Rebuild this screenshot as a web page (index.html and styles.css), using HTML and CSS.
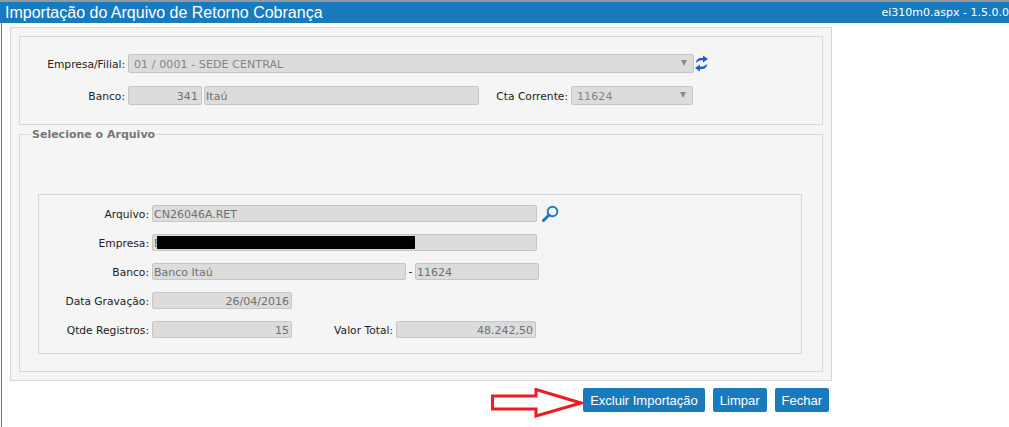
FILE: index.html
```html
<!DOCTYPE html>
<html lang="en">
<head>
    <meta charset="UTF-8">
    <title>Importação do Arquivo de Retorno Cobrança</title>
    <link rel="stylesheet" href="styles.css">
</head>
<body>
    <div class="title-bar">
        <span class="title">Importação do Arquivo de Retorno Cobrança</span>
        <span class="version">ei310m0.aspx - 1.5.0.0</span>
    </div>

    <div class="content">
        <div class="panel">
            <div class="box filter-box">
                <div class="row">
                    <label class="lbl lbl-filter">Empresa/Filial:</label>
                    <div class="field select w-company">01 / 0001 - SEDE CENTRAL<span class="caret"></span></div>
                    <svg class="refresh" width="13" height="17" viewBox="0 0 13 17">
                        <path d="M1 8 C1 4 4 2.500 8 3 L8 0.500 L13 4 L8 7.500 L8 5.500 C5.500 5 3 6 1 8 Z" fill="#1c5fd0"/>
                        <path d="M12 9 C12 13 9 14.500 5 14 L5 16.500 L0 13 L5 9.500 L5 11.500 C7.500 12 10 11 12 9 Z" fill="#1c5fd0"/>
                    </svg>
                </div>
                <div class="row">
                    <label class="lbl lbl-filter">Banco:</label>
                    <div class="field right w-code">341</div>
                    <div class="field w-bank">Itaú</div>
                    <label class="lbl lbl-account">Cta Corrente:</label>
                    <div class="field select w-account">11624<span class="caret"></span></div>
                </div>
            </div>

            <fieldset class="box file-box">
                <legend>Selecione o Arquivo</legend>
                <div class="file-data">
                    <div class="row">
                        <label class="lbl lbl-file">Arquivo:</label>
                        <div class="field w-file">CN26046A.RET</div>
                        <svg class="search" width="17" height="17" viewBox="0 0 17 17">
                            <circle cx="10.500" cy="6.500" r="4.800" fill="none" stroke="#1b7bc0" stroke-width="2"/>
                            <path d="M7 10 L1.500 15.500" stroke="#1b7bc0" stroke-width="3" stroke-linecap="round"/>
                        </svg>
                    </div>
                    <div class="row">
                        <label class="lbl lbl-file">Empresa:</label>
                        <div class="field w-file redacted-field">E<span class="redacted"></span></div>
                    </div>
                    <div class="row">
                        <label class="lbl lbl-file">Banco:</label>
                        <div class="field w-bankname">Banco Itaú</div>
                        <span class="dash">-</span>
                        <div class="field w-bankacc">11624</div>
                    </div>
                    <div class="row">
                        <label class="lbl lbl-file">Data Gravação:</label>
                        <div class="field right w-short">26/04/2016</div>
                    </div>
                    <div class="row">
                        <label class="lbl lbl-file">Qtde Registros:</label>
                        <div class="field right w-short">15</div>
                        <label class="lbl lbl-total">Valor Total:</label>
                        <div class="field right w-short">48.242,50</div>
                    </div>
                </div>
            </fieldset>
        </div>

        <div class="actions">
            <svg class="arrow" width="93" height="30" viewBox="0 0 93 30">
                <path d="M1.500 8 L45 8 L45 1.500 L90 15 L45 28 L45 21 L1.500 21 Z" fill="#fff" stroke="#ed1c24" stroke-width="3"/>
            </svg>
            <button class="btn">Excluir Importação</button>
            <button class="btn">Limpar</button>
            <button class="btn">Fechar</button>
        </div>
    </div>
</body>
</html>
```

FILE: styles.css
```css
html, body {
    height: 427px;
    overflow: hidden;
}

body {
    margin: 0;
    padding: 0;
    background: white;
    font-family: "DejaVu Sans", sans-serif;
    font-size: 11px;
    color: #222;
}

.title-bar {
    display: flex;
    justify-content: space-between;
    align-items: center;
    height: 21px;
    border-top: 2px solid #999;
    padding: 0 0 0 5px;
    background-color: #197bbd;
    color: white;
}

.title {
    font-family: "Liberation Sans", sans-serif;
    font-size: 16px;
}

.content {
    box-sizing: border-box;
    height: 404px;
    margin-left: 1px;
    padding: 4px 0 0 8px;
    border-left: 1px solid #3a86c2;
}

.panel {
    box-sizing: border-box;
    width: 822px;
    height: 354px;
    padding: 8px;
    background-color: #f5f5f5;
    border: 1px solid #d8d8d8;
}

.box {
    box-sizing: border-box;
    width: 804px;
    margin: 0;
    background-color: #f5f5f5;
    border: 1px solid #d8d8d8;
}

.filter-box {
    display: flex;
    flex-direction: column;
    gap: 13px;
    height: 89px;
    padding: 17px 0 0 0;
}

.file-box {
    height: 244px;
    margin-top: 3px;
    padding: 0;
}

.file-box legend {
    margin-left: 11px;
    padding: 2px 1px 0 1px;
    color: #777;
    font-size: 11px;
    font-weight: bold;
    line-height: 10px;
}

.file-data {
    box-sizing: border-box;
    display: flex;
    flex-direction: column;
    gap: 12px;
    width: 764px;
    height: 160px;
    margin: 54px 0 0 18px;
    padding: 10px 0 0 0;
    border: 1px solid #d8d8d8;
}

.row {
    display: flex;
    align-items: center;
}

.lbl {
    text-align: right;
    padding: 1px 3px 0 0;
    box-sizing: border-box;
    font-size: 10.7px;
}

.lbl-filter { width: 108px; }
.lbl-account { width: 92px; }
.lbl-file { width: 113px; }
.lbl-total { width: 104px; }

.field {
    box-sizing: border-box;
    position: relative;
    height: 19px;
    line-height: 19px;
    padding: 0 3px 0 1px;
    background-color: #dcdcdc;
    border: 1px solid #c6c6c6;
    border-radius: 2px;
    color: #707070;
    letter-spacing: 0.1px;
    white-space: nowrap;
}

.file-data .field {
    height: 17px;
    line-height: 17px;
    padding: 0 2px 0 1px;
    letter-spacing: 0;
}

.right { text-align: right; }

.select {
    padding-left: 5px;
    color: #858585;
}

.caret {
    position: absolute;
    right: 6px;
    top: 5px;
    border-left: 3.500px solid transparent;
    border-right: 3.500px solid transparent;
    border-top: 6px solid #888;
}

.w-company { width: 566px; }
.w-code { width: 74px; margin-right: 2px; }
.w-bank { width: 275px; }
.w-account { width: 122px; }
.w-file { width: 385px; }
.w-bankname { width: 254px; }
.w-bankacc { width: 124px; }
.w-short { width: 140px; }

.dash {
    width: 9px;
    text-align: center;
}

.redacted-field {
    overflow: hidden;
}

.redacted {
    position: absolute;
    left: 4px;
    top: 1px;
    width: 258px;
    height: 13px;
    background-color: black;
}

.refresh { margin: 0 0 0 1px; }
.search { margin: -1px 0 0 5px; }

.actions {
    display: flex;
    align-items: flex-start;
    gap: 8px;
    width: 819px;
    margin-top: 7px;
    justify-content: flex-end;
}

.arrow {
    margin-right: -9px;
}

.btn {
    height: 24px;
    padding: 0 7px;
    background-color: #197bbd;
    color: white;
    border: none;
    border-radius: 2px;
    font-family: "Liberation Sans", sans-serif;
    font-size: 13px;
    white-space: nowrap;
}
```
